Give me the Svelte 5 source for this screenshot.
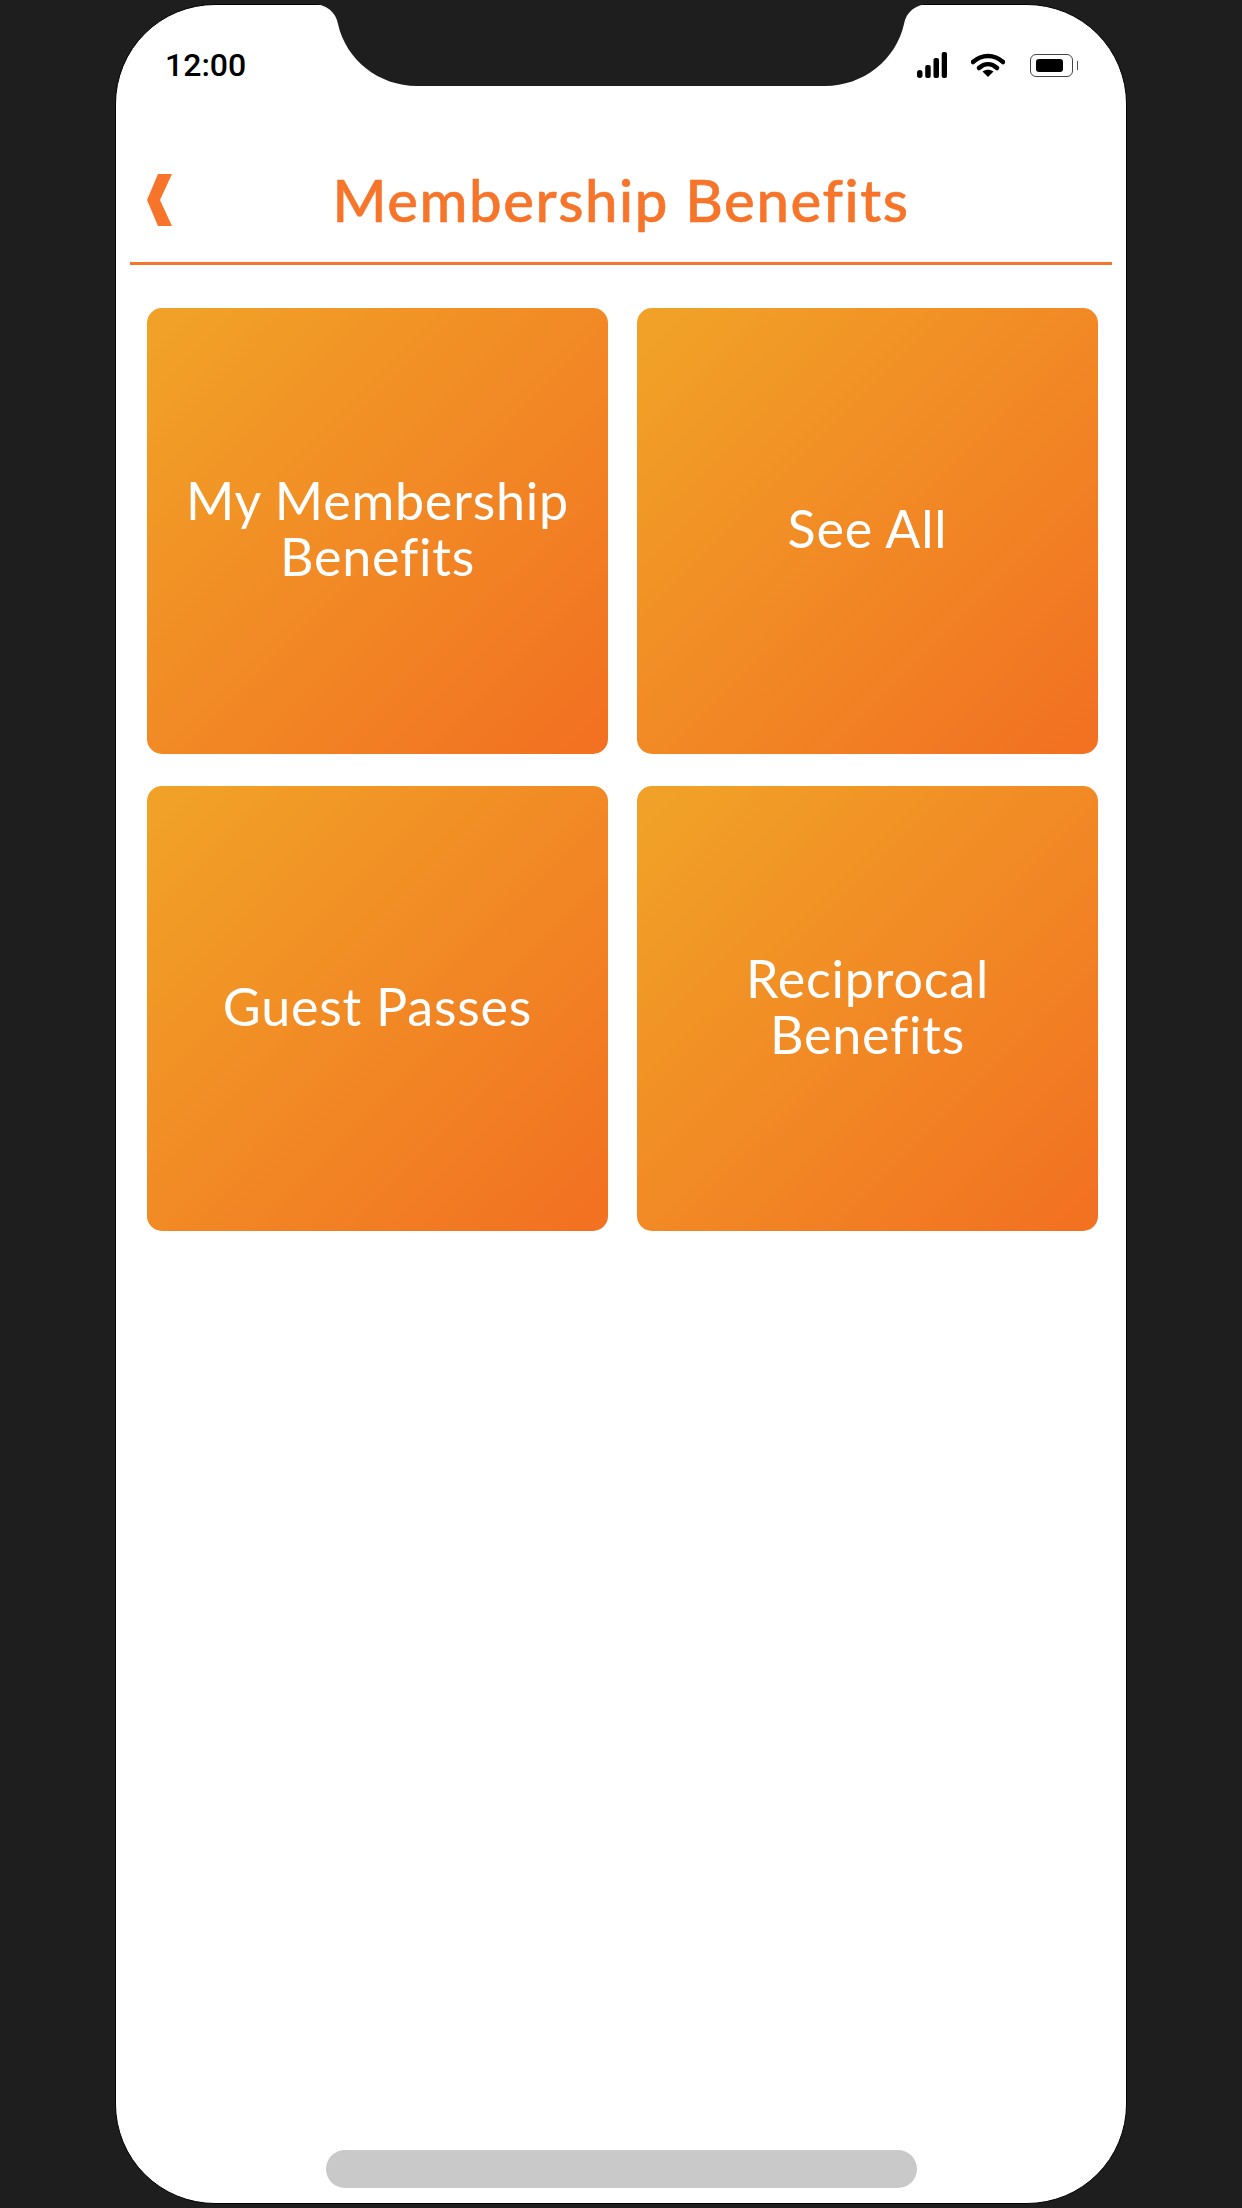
<script lang="ts">
  const tiles = [
    ['My Membership', 'Benefits'],
    ['See All'],
    ['Guest Passes'],
    ['Reciprocal', 'Benefits']
  ];
</script>

<div class="phone">
  <svg class="notch" width="616" height="90" viewBox="0 0 616 90">
    <path d="M0 0V4C13 4 23 12 25 24C33 60 66 86 104 86H512C550 86 583 60 591 24C593 12 603 4 616 4V0Z" />
  </svg>

  <div class="status">
    <span class="time">12:00</span>
    <div class="icons">
      <svg width="30" height="26" viewBox="0 0 30 26">
        <rect x="0" y="18" width="5.500" height="8" rx="2.700" />
        <rect x="8.200" y="13" width="5.500" height="13" rx="2" />
        <rect x="16.500" y="6" width="5.500" height="20" rx="2" />
        <rect x="24.700" y="0" width="5.300" height="26" rx="2" />
      </svg>
      <svg width="34" height="24" viewBox="0 0 34 24">
        <path class="arc" d="M2 9C11 1 23 1 32 9" />
        <path class="arc" d="M8 15C13.500 10 20.500 10 26 15" />
        <path d="M11.500 18.500C15 16 19 16 22.500 18.500L17 24Z" />
      </svg>
      <div class="battery">
        <div class="cell"><div class="charge"></div></div>
        <div class="nub"></div>
      </div>
    </div>
  </div>

  <header class="top">
    <svg class="back" width="25" height="52" viewBox="0 0 25 52">
      <path d="M11 0H25L13 26L25 52H11L0 26Z" />
    </svg>
    <h1>Membership Benefits</h1>
  </header>

  <main class="grid">
    {#each tiles as lines}
      <button class="tile">
        {#each lines as line}
          <span>{line}</span>
        {/each}
      </button>
    {/each}
  </main>

  <div class="home"></div>
</div>

<style>
  :global(body) {
    background: #1e1e1e;
  }

  .phone {
    position: relative;
    box-sizing: border-box;
    display: flex;
    flex-direction: column;
    width: 1012px;
    height: 2200px;
    margin: 4px 0 0 115px;
    background: #fff;
    border: 1px solid #000;
    border-radius: 100px;
    font-family: Lato, sans-serif;
  }

  .notch {
    position: absolute;
    top: -5px;
    left: 197px;
    fill: #1e1e1e;
  }

  .status {
    display: flex;
    justify-content: space-between;
    align-items: center;
    height: 40px;
    padding: 40px 48px 0 49px;
  }

  .time {
    font-family: Roboto, sans-serif;
    font-size: 32px;
    font-weight: 500;
    color: #000;
  }

  .icons {
    display: flex;
    align-items: center;
    gap: 24px;
  }

  .icons svg {
    fill: #000;
  }

  .arc {
    fill: none;
    stroke: #000;
    stroke-width: 4.500;
    stroke-linecap: round;
  }

  .battery {
    display: flex;
    align-items: center;
    gap: 4px;
    margin-left: 1px;
  }

  .cell {
    box-sizing: border-box;
    width: 43px;
    height: 23px;
    padding: 4px 5px;
    border: 1px solid #444;
    border-radius: 6px;
  }

  .charge {
    width: 27px;
    height: 13px;
    background: #000;
    border-radius: 3px;
  }

  .nub {
    width: 1px;
    height: 9px;
    background: #555;
  }

  .top {
    display: grid;
    grid-template-columns: 1fr auto 1fr;
    align-items: center;
    margin: 89px 14px 0 14px;
    padding: 0 0 36px 17px;
    border-bottom: 3px solid #f6752a;
  }

  .back {
    fill: #f6752a;
  }

  h1 {
    margin: 0 0 0 -17px;
    font-size: 58px;
    font-weight: 500;
    line-height: 52px;
    letter-spacing: 1.600px;
    color: #f6752a;
    -webkit-text-stroke: 0.6px #f6752a;
  }

  .grid {
    display: grid;
    grid-template-columns: 461px 461px;
    grid-auto-rows: 445.500px;
    gap: 32px 29px;
    padding: 43px 0 0 31px;
  }

  .tile {
    display: flex;
    flex-direction: column;
    align-items: center;
    justify-content: center;
    padding: 0 0 5px;
    border: 0;
    border-radius: 15px;
    background: linear-gradient(135deg, #f1a127 5%, #f27222 95%);
    color: #fff;
    font-family: inherit;
    font-size: 52px;
    font-weight: 400;
    line-height: 56px;
    letter-spacing: 0.800px;
  }

  .home {
    position: absolute;
    left: 210px;
    bottom: 15px;
    width: 591px;
    height: 38px;
    background: #c9c9c9;
    border-radius: 19px;
  }
</style>
